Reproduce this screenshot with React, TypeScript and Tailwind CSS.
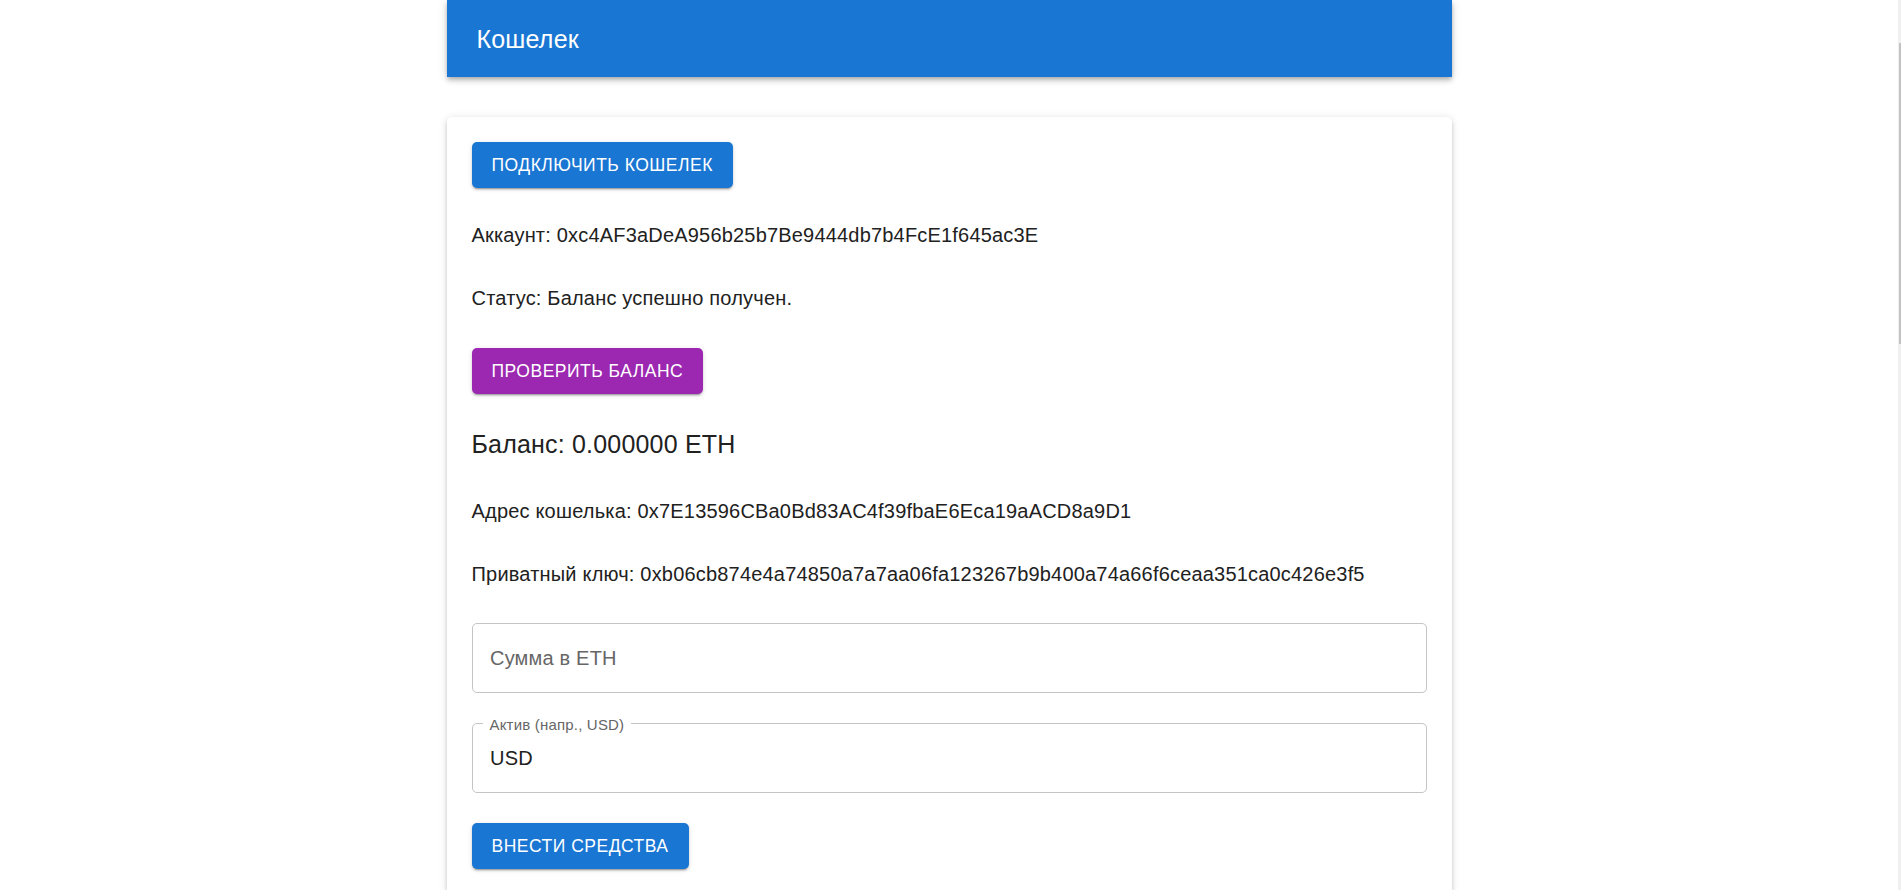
import React from "react";

const btn =
  "h-[46px] px-[20px] rounded-[5px] text-white uppercase text-[17.5px] leading-[30px] tracking-[0.5px] font-medium shadow-[0px_3px_1px_-2px_rgba(0,0,0,0.2),0px_2px_2px_0px_rgba(0,0,0,0.14),0px_1px_5px_0px_rgba(0,0,0,0.12)]";

function Line({ children, className = "" }: { children: React.ReactNode; className?: string }) {
  return (
    <p className={`text-[20px] leading-[30px] tracking-[0.19px] text-[#212121] ${className}`}>{children}</p>
  );
}

export default function App() {
  return (
    <div
      className="flex h-[890px] overflow-hidden bg-white"
      style={{ fontFamily: '"Liberation Sans", Arial, sans-serif' }}
    >
      <div className="flex-1">
        <header className="mx-auto flex h-[77px] w-[1005px] items-center bg-[#1976d2] px-[30px] shadow-[0px_2px_4px_-1px_rgba(0,0,0,0.2),0px_4px_5px_0px_rgba(0,0,0,0.14),0px_1px_10px_0px_rgba(0,0,0,0.12)]">
          <h1 className="text-[25px] leading-[40px] tracking-[0.19px] text-white">Кошелек</h1>
        </header>

        <main className="mx-auto mt-[40px] w-[1005px] rounded-[5px] bg-white p-[25px] shadow-[0px_3px_3px_-2px_rgba(0,0,0,0.2),0px_3px_4px_0px_rgba(0,0,0,0.14),0px_1px_8px_0px_rgba(0,0,0,0.12)]">
          <button className={`${btn} bg-[#1976d2]`}>Подключить кошелек</button>

          <Line className="mt-[32px]">Аккаунт: 0xc4AF3aDeA956b25b7Be9444db7b4FcE1f645ac3E</Line>
          <Line className="mt-[33.3px]">Статус: Баланс успешно получен.</Line>

          <button className={`${btn} mt-[34.6px] bg-[#9c27b0]`}>Проверить баланс</button>

          <h2 className="mt-[30px] text-[25px] leading-[40px] tracking-[0.19px] text-[#212121]">
            Баланс: 0.000000 ETH
          </h2>

          <Line className="mt-[31.7px]">Адрес кошелька: 0x7E13596CBa0Bd83AC4f39fbaE6Eca19aACD8a9D1</Line>
          <Line className="mt-[33.4px]">
            Приватный ключ: 0xb06cb874e4a74850a7a7aa06fa123267b9b400a74a66f6ceaa351ca0c426e3f5
          </Line>

          <div className="mt-[34.2px] flex h-[70px] items-center rounded-[5px] border border-[#c4c4c4] px-[17.5px]">
            <span className="text-[20px] leading-[28px] tracking-[0.19px] text-[#666666]">Сумма в ETH</span>
          </div>

          <div className="relative mt-[30px] flex h-[70px] items-center rounded-[5px] border border-[#c4c4c4] px-[17.5px]">
            <span className="absolute left-[10px] top-0 -translate-y-1/2 bg-white px-[7px] text-[15px] leading-[15px] tracking-[0.19px] text-[#666666]">
              Актив (напр., USD)
            </span>
            <span className="text-[20px] leading-[28px] tracking-[0.19px] text-[#212121]">USD</span>
          </div>

          <button className={`${btn} mt-[30px] bg-[#1976d2]`}>Внести средства</button>
        </main>
      </div>

      <div className="flex w-[3px] flex-col bg-[#f0f0f0] pt-[43px]">
        <div className="ml-[1px] h-[301px] w-[2px] bg-[#c2c2c2]" />
      </div>
    </div>
  );
}
